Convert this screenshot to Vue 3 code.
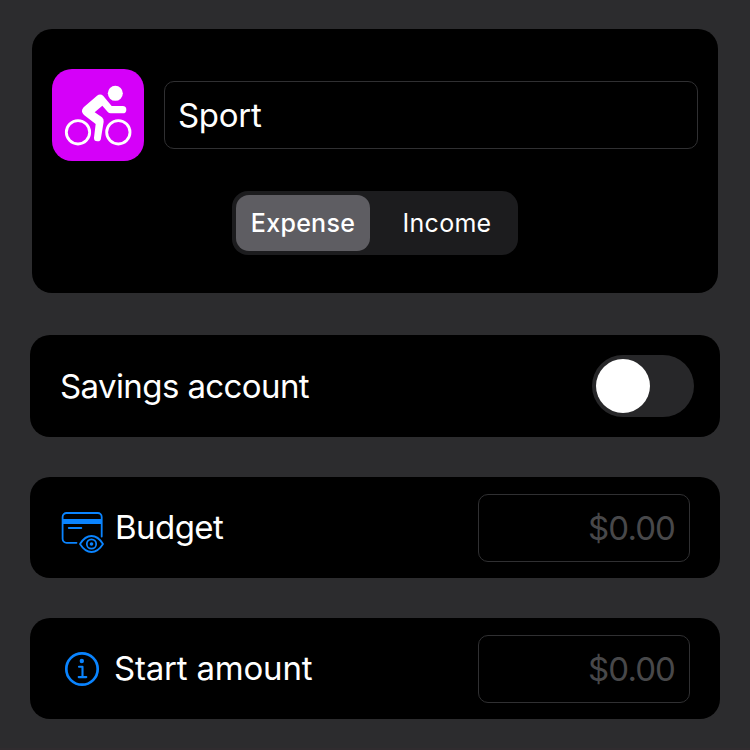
<script setup>
import { ref } from 'vue'

const name = ref('Sport')
const kinds = ['Expense', 'Income']
const kind = ref('Expense')
const savings = ref(false)
const budget = ref('')
const start = ref('')
</script>

<template>
  <main class="screen">
    <section class="card head">
      <div class="identity">
        <div class="badge">
          <svg viewBox="0 0 276 276" width="92" height="92">
            <g fill="none" stroke="#fff" stroke-width="8.5">
              <circle cx="78" cy="190" r="35" />
              <circle cx="199" cy="190" r="35" />
            </g>
            <circle cx="190" cy="73" r="22.5" fill="#fff" />
            <path
              fill="#fff"
              d="M135 80Q145 73 154 81L179 111H212A11 11 0 0 1 212 133H176Q171 133 168 130L151 110L128 130L150 145Q156 150 155 158L147 207A10.5 10.5 0 0 1 126 206L131 165L96 138Q84 127 95 115Z"
            />
          </svg>
        </div>
        <input v-model="name" class="field name" type="text" />
      </div>
      <div class="segments">
        <button
          v-for="k in kinds"
          :key="k"
          class="segment"
          :class="{ active: kind === k }"
          @click="kind = k"
        >
          {{ k }}
        </button>
      </div>
    </section>

    <section class="card row savings">
      <span class="label savings-label">Savings account</span>
      <button class="toggle" :class="{ on: savings }" @click="savings = !savings">
        <span class="knob"></span>
      </button>
    </section>

    <section class="card row">
      <svg class="icon" viewBox="0 0 44 48" width="44" height="48" fill="none" stroke="#0a84ff">
        <path stroke-width="1.8" stroke-linecap="round" d="M16.5 38.8H6.6A4 4 0 0 1 2.6 34.8V13A4 4 0 0 1 6.6 9H37.7A4 4 0 0 1 41.7 13V32.5" />
        <path stroke-width="4.8" d="M2.6 17.5H41.7" />
        <path stroke-width="1.9" stroke-linecap="round" d="M8.8 24H21.3" />
        <path stroke-width="1.8" stroke-linejoin="round" d="M20 40Q25 32 31.5 32T43 40Q38 48 31.5 48T20 40Z" />
        <circle cx="31.5" cy="40" r="4.7" stroke-width="1.7" />
        <circle cx="31.5" cy="40" r="1.8" fill="#0a84ff" stroke="none" />
      </svg>
      <span class="label budget-label">Budget</span>
      <input v-model="budget" class="field amount" placeholder="$0.00" />
    </section>

    <section class="card row">
      <svg class="icon" viewBox="0 0 44 44" width="44" height="44" fill="none" stroke="#0a84ff">
        <circle cx="22" cy="22" r="15.7" stroke-width="2.7" />
        <circle cx="21.8" cy="14" r="2.2" fill="#0a84ff" stroke="none" />
        <path stroke-width="2.1" stroke-linecap="round" stroke-linejoin="round" d="M19 19.8H22.5V30M18.7 30.1H26.3" />
      </svg>
      <span class="label start-label">Start amount</span>
      <input v-model="start" class="field amount" placeholder="$0.00" />
    </section>
  </main>
</template>

<style>
body {
  margin: 0;
  background: #2c2c2e;
}
</style>

<style scoped>
.screen {
  box-sizing: border-box;
  width: 750px;
  height: 750px;
  padding: 29px 30px 0;
  background: #2c2c2e;
  border-bottom: 2px solid #302c2f;
  font-family: Inter, "Liberation Sans", sans-serif;
  color: #fff;
  overflow: hidden;
}
.card {
  box-sizing: border-box;
  background: #000;
  border-radius: 20px;
}
.head {
  height: 264px;
  margin: 0 2px 42px;
  padding: 40px 20px 0;
}
.identity {
  display: flex;
  align-items: center;
  gap: 20px;
}
.badge {
  width: 92px;
  height: 92px;
  flex: none;
  border-radius: 20px;
  background: #d500f9;
}
.badge svg,
.icon {
  display: block;
  overflow: visible;
}
.field {
  box-sizing: border-box;
  height: 68px;
  margin: 0;
  padding: 0 14px;
  border: 1px solid #303032;
  border-radius: 10px;
  outline: none;
  background: transparent;
  color: #fff;
  font-family: inherit;
  font-size: 33px;
}
.name {
  flex: 1;
  min-width: 0;
  padding-left: 13px;
  letter-spacing: -0.3px;
}
.segments {
  box-sizing: border-box;
  display: flex;
  width: 286px;
  height: 64px;
  margin: 30px auto 0;
  padding: 4px;
  border-radius: 16px;
  background: #1c1c1e;
}
.segment {
  flex: 0 0 134px;
  padding: 0;
  border: 0;
  border-radius: 13px;
  background: transparent;
  color: #fff;
  font-family: inherit;
  font-size: 25px;
  letter-spacing: 0.3px;
}
.segment + .segment {
  flex: 1;
  padding-left: 10px;
}
.segment.active {
  background: #5e5d62;
  font-weight: 500;
}
.row {
  display: flex;
  align-items: center;
  height: 101px;
  margin-bottom: 40px;
  padding: 0 30px;
}
.savings {
  height: 102px;
  padding-right: 26px;
}
.label {
  flex: 1;
  font-size: 33px;
  line-height: 40px;
  white-space: nowrap;
}
.savings-label {
  letter-spacing: -0.6px;
}
.budget-label,
.start-label {
  padding-bottom: 2px;
}
.budget-label {
  padding-left: 1px;
  letter-spacing: -0.55px;
}
.start-label {
  letter-spacing: -0.2px;
}
.icon {
  flex: none;
  margin-right: 10px;
}
.toggle {
  box-sizing: border-box;
  width: 102px;
  height: 62px;
  padding: 4px;
  border: 0;
  border-radius: 31px;
  background: #272729;
}
.knob {
  display: block;
  width: 54px;
  height: 54px;
  border-radius: 50%;
  background: #fff;
}
.toggle.on {
  background: #30d158;
}
.toggle.on .knob {
  margin-left: 40px;
}
.amount {
  width: 212px;
  text-align: right;
  letter-spacing: -0.9px;
}
.amount::placeholder {
  color: #48484a;
  opacity: 1;
}
</style>
